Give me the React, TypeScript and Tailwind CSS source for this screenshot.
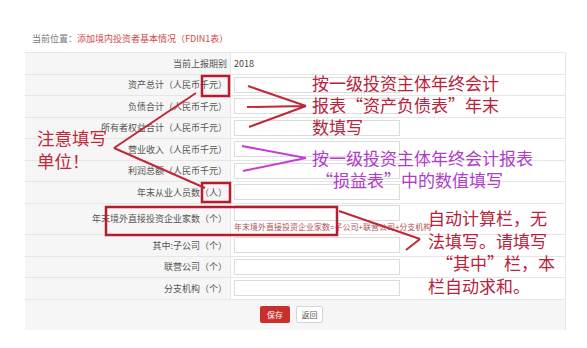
import React from 'react';

const rows = [
  { label: '资产总计（人民币千元）' },
  { label: '负债合计（人民币千元）' },
  { label: '所有者权益合计（人民币千元）' },
  { label: '营业收入（人民币千元）' },
  { label: '利润总额（人民币千元）' },
  { label: '年末从业人员数（人）' },
];

const subRows = ['其中:子公司（个）', '联营公司（个）', '分支机构（个）'];

function Row({ label, children, tall }: { label: string; children?: React.ReactNode; tall?: boolean }) {
  return (
    <div className={`flex border-b border-[#e6e6e6] ${tall ? 'h-[31.5px]' : 'h-[21.5px]'}`}>
      <div className="w-[206px] shrink-0 bg-[#f6f6f6] border-r border-[#e6e6e6] flex items-center justify-end pr-[3px] text-[9px] text-[#555]">
        {label}
      </div>
      <div className="flex-1 flex flex-col justify-center pl-[3px]">{children}</div>
    </div>
  );
}

function Input() {
  return <div className="w-[166px] h-[16px] bg-white border border-[#dcdcdc]" />;
}

export default function App() {
  return (
    <div
      className="relative w-[587px] h-[348px] bg-white overflow-hidden"
      style={{ fontFamily: '"Noto Sans CJK SC", "Noto Sans", sans-serif' }}
    >
      <div className="pt-[32px] pl-[32px] h-[52px] text-[9px] leading-[14px]">
        <span className="text-[#777]">当前位置：</span>
        <span className="text-[#d04a4a]">添加境内投资者基本情况（FDIN1表）</span>
      </div>

      <div className="ml-[25px] w-[541px] border-t border-r border-[#e6e6e6]">
        <Row label="当前上报期别">
          <span className="text-[9px] text-[#444]">2018</span>
        </Row>
        {rows.map((r) => (
          <Row key={r.label} label={r.label}>
            <Input />
          </Row>
        ))}
        <Row label="年末境外直接投资企业家数（个）" tall>
          <Input />
          <span className="text-[8px] leading-[11px] text-[#b05050] whitespace-nowrap">
            年末境外直接投资企业家数=子公司+联营公司+分支机构
          </span>
        </Row>
        {subRows.map((l) => (
          <Row key={l} label={l}>
            <Input />
          </Row>
        ))}
        <div className="h-[30px] bg-[#f6f6f6] flex items-center pl-[235px] gap-[6px]">
          <button className="w-[30px] h-[17px] bg-[#c9302c] rounded-[2px] text-[8px] text-white">保存</button>
          <button className="w-[27px] h-[17px] bg-white border border-[#d6d6d6] rounded-[2px] text-[8px] text-[#555]">返回</button>
        </div>
      </div>

      {/* annotations */}
      <svg className="absolute inset-0" width="587" height="348" viewBox="0 0 587 348" fill="none">
        <rect x="202" y="76" width="27" height="20" stroke="#b81c2c" strokeWidth="2.5" />
        <rect x="202" y="183" width="28" height="19" stroke="#b81c2c" strokeWidth="2.5" />
        <rect x="106" y="207" width="231" height="28" stroke="#b81c2c" strokeWidth="2.5" />
        <path d="M114 148 L196 93 M114 148 L205 188" stroke="#c0283a" strokeWidth="2" />
        <path d="M248 86 L306 106 M247 107 L306 106 M249 127 L306 106" stroke="#c0283a" strokeWidth="2" />
        <path d="M242 146 L306 158 M243 171 L306 158" stroke="#c23fd2" strokeWidth="2" />
        <path d="M339 211 L420 239 M420 239 L406 250" stroke="#c0283a" strokeWidth="2" />
      </svg>

      <div className="absolute left-[37px] top-[126px] text-[17.5px] leading-[23px] text-[#c0283a]">
        <div>注意填写</div>
        <div>单位！</div>
      </div>
      <div className="absolute left-[312px] top-[72px] text-[17px] leading-[22px] text-[#b8223a] whitespace-nowrap">
        <div>按一级投资主体年终会计</div>
        <div>报表“资产负债表”年末</div>
        <div>数填写</div>
      </div>
      <div className="absolute left-[312px] top-[147px] text-[17px] leading-[22px] text-[#b03cc8] whitespace-nowrap">
        <div>按一级投资主体年终会计报表</div>
        <div className="pl-[4px]">“损益表”中的数值填写</div>
      </div>
      <div className="absolute left-[428px] top-[207px] text-[17px] leading-[22.5px] text-[#b8223a] whitespace-nowrap">
        <div>自动计算栏，无</div>
        <div>法填写。请填写</div>
        <div className="pl-[8px]">“其中”栏，本</div>
        <div>栏自动求和。</div>
      </div>
    </div>
  );
}
